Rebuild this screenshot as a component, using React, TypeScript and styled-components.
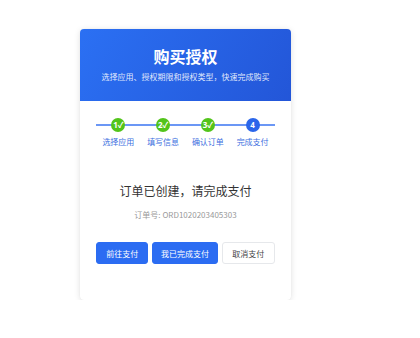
import styled, { createGlobalStyle } from "styled-components";

const GlobalStyle = createGlobalStyle`
  html, body {
    margin: 0;
    padding: 0;
    background: #ffffff;
    font-family: "Noto Sans CJK SC", "Noto Sans", sans-serif;
  }
`;

const Page = styled.div`
  padding: 29px 0 0 80px;
`;

const Card = styled.section`
  width: 211px;
  height: 271px;
  background: #fff;
  border-radius: 4px;
  box-shadow: 0 1px 6px rgba(0, 0, 0, 0.12), 0 0 1px rgba(0, 0, 0, 0.08);
  overflow: hidden;
  display: flex;
  flex-direction: column;
`;

const Header = styled.header`
  height: 72px;
  box-sizing: border-box;
  padding-top: 16px;
  background: linear-gradient(120deg, #2b70f3 0%, #2356d8 100%);
  color: #fff;
  text-align: center;
`;

const Title = styled.h1`
  margin: 0;
  font-size: 16px;
  line-height: 22px;
  font-weight: 700;
`;

const Subtitle = styled.p`
  margin: 4px 0 0;
  font-size: 8px;
  line-height: 12px;
  color: rgba(255, 255, 255, 0.88);
`;

const Body = styled.div`
  padding: 0 16px;
  display: flex;
  flex-direction: column;
`;

const Steps = styled.div`
  position: relative;
  margin-top: 17px;
  display: grid;
  grid-template-columns: repeat(4, 1fr);

  &::before {
    content: "";
    position: absolute;
    left: 0;
    right: 0;
    top: 6px;
    height: 2px;
    background: #6b97f5;
  }
`;

const Step = styled.div`
  position: relative;
  display: flex;
  flex-direction: column;
  align-items: center;
`;

const Dot = styled.div<{ $done: boolean }>`
  width: 14px;
  height: 14px;
  border-radius: 50%;
  background: ${(p) => (p.$done ? "#52c41a" : "#2b66ea")};
  color: #fff;
  font-size: 8px;
  font-weight: 700;
  line-height: 14px;
  text-align: center;
  font-family: "Noto Sans", "Noto Sans CJK SC", sans-serif;
`;

const StepLabel = styled.span`
  margin-top: 5px;
  font-size: 8px;
  line-height: 10px;
  color: #3d6fe0;
`;

const Heading = styled.h2`
  margin: 35px 0 0;
  text-align: center;
  font-size: 12px;
  line-height: 17px;
  font-weight: 400;
  color: #333;
`;

const OrderNo = styled.p`
  margin: 10px 0 0;
  text-align: center;
  font-size: 8px;
  line-height: 12px;
  color: #999;
`;

const Actions = styled.div`
  margin-top: 21px;
  display: flex;
  gap: 4px;
`;

const Button = styled.button<{ $primary?: boolean; $w: number }>`
  width: ${(p) => p.$w}px;
  height: 22px;
  padding: 0;
  border-radius: 3px;
  font-family: inherit;
  font-size: 8px;
  cursor: pointer;
  border: 1px solid ${(p) => (p.$primary ? "#2b6cf2" : "#e6e8eb")};
  background: ${(p) => (p.$primary ? "#2b6cf2" : "#fff")};
  color: ${(p) => (p.$primary ? "#fff" : "#444")};
`;

const steps = [
  { n: "1✓", label: "选择应用", done: true },
  { n: "2✓", label: "填写信息", done: true },
  { n: "3✓", label: "确认订单", done: true },
  { n: "4", label: "完成支付", done: false },
];

export default function App() {
  return (
    <Page>
      <GlobalStyle />
      <Card>
        <Header>
          <Title>购买授权</Title>
          <Subtitle>选择应用、授权期限和授权类型，快速完成购买</Subtitle>
        </Header>
        <Body>
          <Steps>
            {steps.map((s) => (
              <Step key={s.label}>
                <Dot $done={s.done}>{s.n}</Dot>
                <StepLabel>{s.label}</StepLabel>
              </Step>
            ))}
          </Steps>
          <Heading>订单已创建，请完成支付</Heading>
          <OrderNo>订单号: ORD1020203405303</OrderNo>
          <Actions>
            <Button $primary $w={53}>前往支付</Button>
            <Button $primary $w={66}>我已完成支付</Button>
            <Button $w={54}>取消支付</Button>
          </Actions>
        </Body>
      </Card>
    </Page>
  );
}
